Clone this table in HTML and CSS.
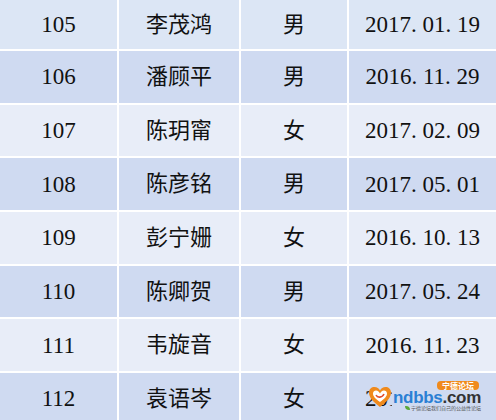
FILE: index.html
```html
<!DOCTYPE html>
<html lang="zh">
<head>
<meta charset="utf-8">
<link rel="stylesheet" href="styles.css">
</head>
<body>
<div class="table">
  <div class="row first"><div class="cell num">105</div><div class="cell">李茂鸿</div><div class="cell">男</div><div class="cell num">2017. 01. 19</div></div>
  <div class="row dark"><div class="cell num">106</div><div class="cell">潘顾平</div><div class="cell">男</div><div class="cell num">2016. 11. 29</div></div>
  <div class="row light"><div class="cell num">107</div><div class="cell">陈玥甯</div><div class="cell">女</div><div class="cell num">2017. 02. 09</div></div>
  <div class="row dark"><div class="cell num">108</div><div class="cell">陈彦铭</div><div class="cell">男</div><div class="cell num">2017. 05. 01</div></div>
  <div class="row light"><div class="cell num">109</div><div class="cell">彭宁姗</div><div class="cell">女</div><div class="cell num">2016. 10. 13</div></div>
  <div class="row dark"><div class="cell num">110</div><div class="cell">陈卿贺</div><div class="cell">男</div><div class="cell num">2017. 05. 24</div></div>
  <div class="row light"><div class="cell num">111</div><div class="cell">韦旋音</div><div class="cell">女</div><div class="cell num">2016. 11. 23</div></div>
  <div class="row dark last"><div class="cell num">112</div><div class="cell">袁语岑</div><div class="cell">女</div><div class="cell num">2017. 03. 15</div></div>
</div>
<div class="watermark">
  <svg class="heart" width="24" height="22" viewBox="0 0 24 22">
    <path d="M12 21 C4 15 1 11 1 6.5 C1 3 3.5 1 6.5 1 C9 1 11 2.5 12 4.5 C13 2.5 15 1 17.5 1 C20.5 1 23 3 23 6.5 C23 11 20 15 12 21 Z" fill="#f08a1c"/>
    <path d="M12 16 C7 12.5 5 10 5 7.5 C5 5.5 6.5 4.5 8 4.5 C10 4.5 11.3 6 12 7.5 C12.7 6 14 4.5 16 4.5 C17.5 4.5 19 5.5 19 7.5 C19 10 17 12.5 12 16 Z" fill="#fff"/>
    <path d="M8 9 C9.5 12 14 12 16 8" stroke="#e24a2a" stroke-width="1.6" fill="none"/>
  </svg>
  <div class="wm-body">
    <div class="wm-badge">宁德论坛</div>
    <div class="wm-name"><span class="nd">ndbbs</span><span class="com">.com</span></div>
    <div class="wm-sub"><span class="leaf"></span>宁德论坛我们自己的公益性论坛</div>
  </div>
</div>
</body>
</html>
```
FILE: styles.css
```css
html, body {
  margin: 0;
  padding: 0;
  background: #ffffff;
}
body {
  width: 496px;
  height: 420px;
  overflow: hidden;
  position: relative;
  font-family: "Liberation Serif", "Noto Sans CJK SC", serif;
  color: #111111;
}
.table {
  display: grid;
  grid-template-rows: 49px repeat(7, 51.7px);
  row-gap: 2px;
  background: #ffffff;
}
.row {
  display: grid;
  grid-template-columns: 117px 120px 106px 1fr;
  column-gap: 2px;
}
.cell {
  display: flex;
  align-items: center;
  justify-content: center;
  font-size: 22px;
  line-height: 1;
}
.cell.num {
  font-size: 23px;
}
.first .cell { background: #dce6f5; }
.dark .cell { background: #cfdaf1; }
.light .cell { background: #e8edf8; }
.watermark {
  position: absolute;
  left: 368px;
  top: 381px;
  display: flex;
  align-items: flex-end;
}
.heart {
  display: block;
  margin-bottom: 5px;
}
.wm-body {
  display: flex;
  flex-direction: column;
  align-items: flex-end;
  padding-left: 1px;
  padding-bottom: 2px;
  background: #cfdaf1;
}
.wm-badge {
  background: #f08a1c;
  color: #fff;
  font-family: "Noto Sans CJK SC", sans-serif;
  font-size: 8px;
  line-height: 9px;
  height: 9px;
  overflow: hidden;
  padding: 0 5px;
  border-radius: 4px;
  font-weight: bold;
  margin-right: 2px;
}
.wm-name {
  font-family: "Liberation Sans", sans-serif;
  font-weight: bold;
  font-size: 17px;
  line-height: 15px;
  height: 15px;
  letter-spacing: -0.3px;
}
.nd { color: #2a7fd4; }
.com { color: #333; }
.wm-sub {
  display: flex;
  align-items: center;
  font-family: "Noto Sans CJK SC", sans-serif;
  font-size: 5px;
  line-height: 6px;
  height: 6px;
  color: #555;
  white-space: nowrap;
}
.leaf {
  display: inline-block;
  width: 5px;
  height: 4px;
  background: #5aa83a;
  border-radius: 0 4px 0 4px;
  margin-right: 1px;
}
```
